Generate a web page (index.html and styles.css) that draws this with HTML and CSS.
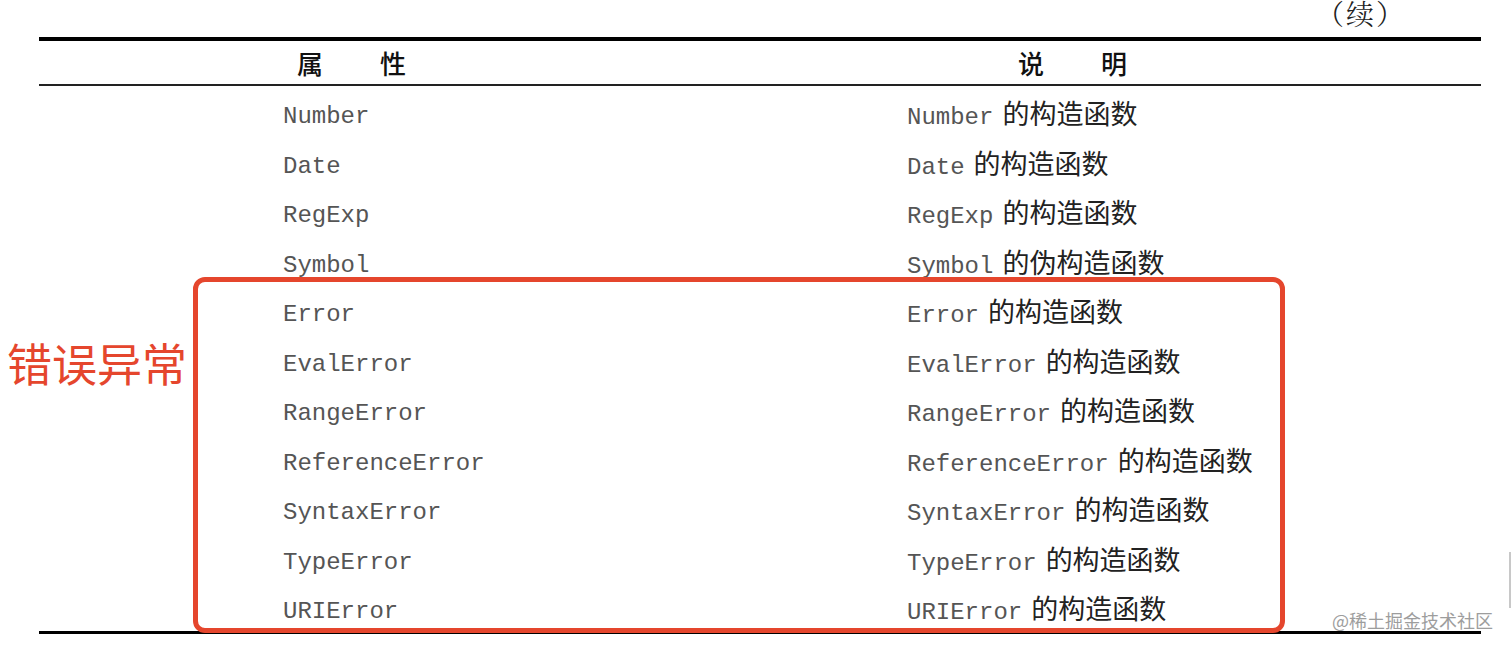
FILE: index.html
```html
<!DOCTYPE html>
<html lang="zh-CN">
<head>
<meta charset="utf-8">
<title>属性表（续）</title>
<link rel="stylesheet" href="styles.css">
</head>
<body>
<div class="page">
  <div class="caption"><span class="caption-text">（续）</span></div>
  <div class="table">
    <div class="thead">
      <div class="th th1"><span>属</span><span>性</span></div>
      <div class="th th2"><span>说</span><span>明</span></div>
    </div>
    <div class="tbody">
      <div class="row"><div class="c1">Number</div><div class="c2"><span class="m">Number</span>的构造函数</div></div>
      <div class="row"><div class="c1">Date</div><div class="c2"><span class="m">Date</span>的构造函数</div></div>
      <div class="row"><div class="c1">RegExp</div><div class="c2"><span class="m">RegExp</span>的构造函数</div></div>
      <div class="row"><div class="c1">Symbol</div><div class="c2"><span class="m">Symbol</span>的伪构造函数</div></div>
      <div class="row"><div class="c1">Error</div><div class="c2"><span class="m">Error</span>的构造函数</div></div>
      <div class="row"><div class="c1">EvalError</div><div class="c2"><span class="m">EvalError</span>的构造函数</div></div>
      <div class="row"><div class="c1">RangeError</div><div class="c2"><span class="m">RangeError</span>的构造函数</div></div>
      <div class="row"><div class="c1">ReferenceError</div><div class="c2"><span class="m">ReferenceError</span>的构造函数</div></div>
      <div class="row"><div class="c1">SyntaxError</div><div class="c2"><span class="m">SyntaxError</span>的构造函数</div></div>
      <div class="row"><div class="c1">TypeError</div><div class="c2"><span class="m">TypeError</span>的构造函数</div></div>
      <div class="row"><div class="c1">URIError</div><div class="c2"><span class="m">URIError</span>的构造函数</div></div>
    </div>
  </div>
  <div class="box"></div>
  <div class="label">错误异常</div>
  <div class="watermark">@稀土掘金技术社区</div>
  <div class="edge"></div>
</div>
</body>
</html>
```

FILE: styles.css
```css
html, body {
  margin: 0;
  padding: 0;
  background: #ffffff;
}

body {
  width: 1512px;
  height: 650px;
  overflow: hidden;
  font-family: "Noto Sans CJK SC", "Noto Sans", sans-serif;
}

.page {
  position: relative;
  width: 1512px;
  height: 650px;
}

.caption {
  height: 37px;
  display: flex;
  justify-content: flex-end;
  align-items: flex-start;
  padding-right: 106px;
  overflow: hidden;
  font-family: "Noto Serif CJK SC", "Noto Sans CJK SC", serif;
  font-size: 28px;
  line-height: 28px;
  color: #222;
}

.caption-text {
  margin-top: -1px;
  font-weight: 300;
  letter-spacing: 2px;
}

.table {
  margin-left: 39px;
  width: 1442px;
  border-top: 4px solid #000;
  border-bottom: 3px solid #000;
}

.thead {
  height: 43px;
  display: grid;
  grid-template-columns: 868px 1fr;
  align-items: center;
  border-bottom: 2px solid #222;
}

.th {
  display: flex;
  gap: 57px;
  font-size: 26px;
  line-height: 30px;
  font-weight: 500;
  color: #111;
}

.th1 {
  padding-left: 258px;
}

.th2 {
  padding-left: 111px;
}

.row {
  height: 49.5px;
  box-sizing: border-box;
  padding-top: 10px;
  display: grid;
  grid-template-columns: 868px 1fr;
  align-items: center;
}

.c1 {
  padding-left: 244px;
  padding-top: 3px;
  font-family: "Liberation Mono", "Courier New", monospace;
  font-size: 24px;
  color: #555555;
  line-height: 30px;
}

.c2 {
  font-size: 27px;
  line-height: 30px;
  color: #222;
  white-space: nowrap;
}

.m {
  font-family: "Liberation Mono", "Courier New", monospace;
  font-size: 24px;
  color: #555555;
  margin-right: 9px;
}

.box {
  position: absolute;
  left: 193px;
  top: 277px;
  width: 1092px;
  height: 356px;
  box-sizing: border-box;
  border: 5px solid #e5462d;
  border-radius: 12px;
}

.label {
  position: absolute;
  left: 7px;
  top: 340px;
  font-size: 45px;
  line-height: 45px;
  color: #e5462d;
}

.watermark {
  position: absolute;
  left: 1332px;
  top: 610px;
  font-size: 18px;
  line-height: 20px;
  color: #9d9d9d;
}

.edge {
  position: absolute;
  left: 1509px;
  top: 552px;
  width: 2px;
  height: 56px;
  background: #c8c8c8;
}
```
